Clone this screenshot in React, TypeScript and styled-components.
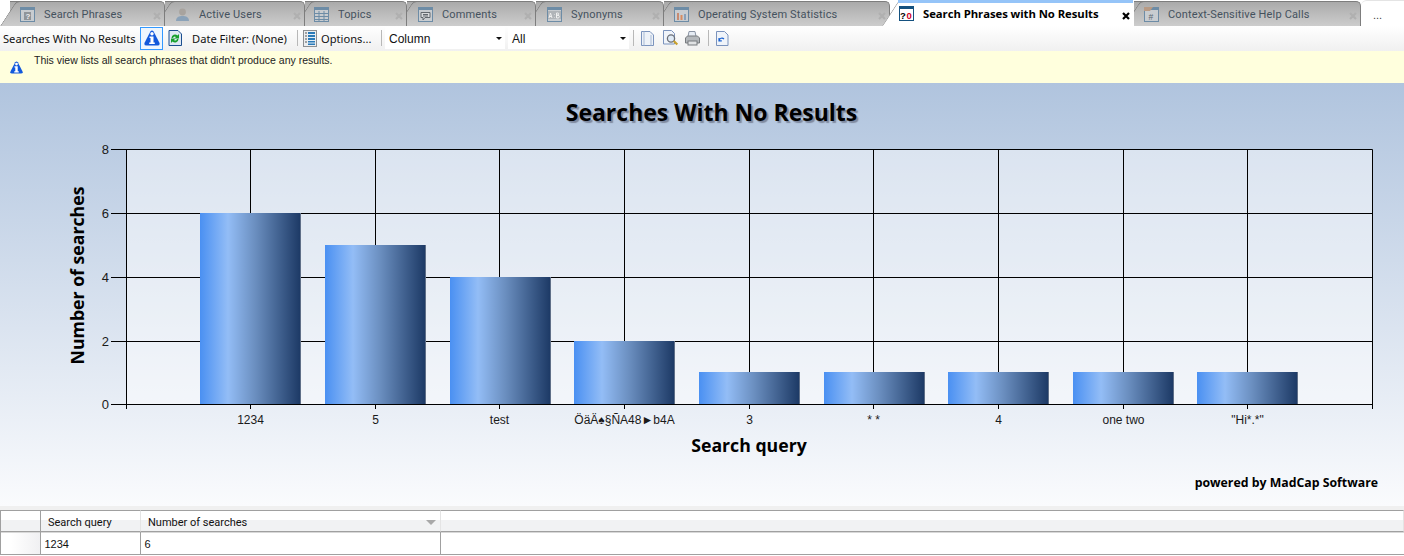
import React from 'react'
import styled, { createGlobalStyle } from 'styled-components'

const GlobalStyle = createGlobalStyle`
  html, body {
    margin: 0;
    padding: 0;
    background: #fff;
    overflow: hidden;
  }
  body {
    font-family: 'Open Sans', 'Noto Sans', sans-serif;
  }
`

const Page = styled.div`
  width: 1404px;
  height: 556px;
  display: flex;
  flex-direction: column;
  overflow: hidden;
`

const TabStrip = styled.div`
  height: 26px;
  display: flex;
  padding-left: 10px;
  background: #fff;
  flex: none;
`

const Tab = styled.div<{ $width: number; $active?: boolean; $z: number }>`
  position: relative;
  width: ${props => props.$width}px;
  box-sizing: border-box;
  z-index: ${props => props.$z};
  display: flex;
  align-items: center;
  margin-top: ${props => (props.$active ? 0 : 1)}px;
  padding-top: ${props => (props.$active ? 3 : 0)}px;
  padding-bottom: ${props => (props.$active ? 2 : 0)}px;
  color: ${props => (props.$active ? '#000' : '#45525e')};
  font-family: ${props => (props.$active ? "'Open Sans'" : 'Roboto')}, sans-serif;
  font-size: ${props => (props.$active ? 11.3 : 11)}px;
  font-weight: ${props => (props.$active ? 700 : 400)};
  letter-spacing: ${props => (props.$active ? '-0.05px' : '0.15px')};
  background: ${props => (props.$active ? '#fff' : 'linear-gradient(#aaaaaa, #cdcdcd)')};
  border-top: ${props => (props.$active ? 'none' : '1px solid #7d7d7d')};
  border-right: 1px solid ${props => (props.$active ? '#fff' : '#7d7d7d')};
  border-top-right-radius: 5px;
  white-space: nowrap;

  &::before {
    content: '';
    position: absolute;
    left: ${props => (props.$active ? -8 : -10)}px;
    top: ${props => (props.$active ? 0 : -1)}px;
    bottom: 0;
    width: 24px;
    z-index: -1;
    transform: skewX(-33deg);
    transform-origin: bottom left;
    background: ${props => (props.$active ? '#fff' : 'linear-gradient(#aaaaaa, #cdcdcd)')};
    border-left: 1px solid ${props => (props.$active ? '#9a9a9a' : '#7d7d7d')};
    border-top: ${props => (props.$active ? 'none' : '1px solid #7d7d7d')};
    border-top-left-radius: 4px;
    box-sizing: border-box;
  }

  &::after {
    content: '';
    display: ${props => (props.$active ? 'block' : 'none')};
    position: absolute;
    left: 8px;
    right: 0;
    top: 0;
    height: 3px;
    background: #95c4f8;
  }
`

const TabIcon = styled.span<{ $offset: number }>`
  position: relative;
  display: flex;
  margin-left: ${props => props.$offset}px;
  margin-right: 9px;
`

const TabLabel = styled.span`
  position: relative;
  flex: 1;
`

const TabClose = styled.span<{ $active?: boolean }>`
  position: relative;
  display: flex;
  margin-right: 3px;
  margin-top: 4px;
  color: ${props => (props.$active ? '#000' : '#b0b0b0')};
`

const MoreTab = styled.div`
  flex: 1;
  position: relative;
  z-index: 0;
  font-size: 11px;
  color: #444;
  padding: 8px 0 0 12px;
  font-family: 'Liberation Sans', sans-serif;
  border-top: 1px solid #e4e4e4;
  border-top-left-radius: 6px;
`

const Toolbar = styled.div`
  height: 25px;
  flex: none;
  display: flex;
  align-items: center;
  background: linear-gradient(#ffffff, #f0f0f0);
  font-family: 'Noto Sans', sans-serif;
  font-size: 11.15px;
  color: #111;
  box-sizing: border-box;
  padding: 0 0 1px 3px;
  white-space: nowrap;
`

const ToolText = styled.span<{ $left?: number; $width: number }>`
  margin-left: ${props => props.$left ?? 0}px;
  width: ${props => props.$width}px;
  flex: none;
`

const ToolButton = styled.span<{ $left: number; $selected?: boolean }>`
  margin-left: ${props => props.$left}px;
  display: flex;
  align-items: center;
  justify-content: center;
  box-sizing: border-box;
  height: ${props => (props.$selected ? '23px' : 'auto')};
  width: ${props => (props.$selected ? '23px' : 'auto')};
  border: ${props => (props.$selected ? '1px solid #3399ff' : 'none')};
  background: ${props => (props.$selected ? '#eef6fe' : 'transparent')};
`

const Separator = styled.span<{ $left: number }>`
  margin-left: ${props => props.$left}px;
  width: 1px;
  height: 16px;
  background: #b8b8b8;
  flex: none;
`

const Combo = styled.div<{ $left: number; $width: number }>`
  margin-left: ${props => props.$left}px;
  width: ${props => props.$width}px;
  height: 22px;
  box-sizing: border-box;
  background: #fff;
  display: flex;
  align-items: center;
  justify-content: space-between;
  padding: 1px 0 0 4px;
  font-family: 'Liberation Sans', sans-serif;
  font-size: 12px;
  flex: none;
  &::after {
    content: '';
    margin-right: 3px;
    border-left: 3px solid transparent;
    border-right: 3px solid transparent;
    border-top: 3px solid #111;
  }
`

const InfoBar = styled.div`
  height: 32px;
  flex: none;
  background: #ffffdd;
  display: flex;
  padding-left: 10px;
  font-family: 'Liberation Sans', sans-serif;
  font-size: 10.5px;
  color: #222;
`

const InfoIconBox = styled.span`
  margin-top: 10px;
  margin-right: 11px;
  display: flex;
  height: 13px;
`

const InfoText = styled.span`
  margin-top: 3px;
  line-height: 13px;
`

const ChartPanel = styled.div`
  height: 423px;
  flex: none;
  display: flex;
  flex-direction: column;
  background: linear-gradient(#b0c4de, #fafbfd);
`

const ChartTitle = styled.div`
  height: 56px;
  box-sizing: border-box;
  padding: 12px 0 0 19px;
  text-align: center;
  font-family: 'Open Sans', sans-serif;
  font-size: 23px;
  line-height: 34px;
  font-weight: 700;
  color: #000;
  text-shadow: 2px 2px 1px #7f8aa0;
`

const ChartSvg = styled.svg`
  display: block;
  flex: none;
`

const AxisLabel = styled.text<{ $size?: number }>`
  font-family: 'Liberation Sans', sans-serif;
  font-size: ${props => props.$size ?? 12}px;
  fill: #1a1a1a;
`

const AxisTitle = styled.text`
  font-family: 'Open Sans', sans-serif;
  font-size: 17.7px;
  font-weight: 700;
  fill: #000;
`

const Powered = styled.div`
  text-align: right;
  padding: 14px 26px 0 0;
  font-family: 'Open Sans', sans-serif;
  font-size: 12.3px;
  line-height: 16px;
  font-weight: 700;
  color: #000;
`

const DataGrid = styled.div`
  flex: 1;
  background: #fff;
  padding-top: 4px;
  display: grid;
  grid-template-columns: 41px 100px 300px 1fr;
  grid-template-rows: 22px 23px;
  background-image: linear-gradient(#f0f0f0, #f0f0f0);
  background-size: 100% 4px;
  background-repeat: no-repeat;
  font-family: 'Liberation Sans', sans-serif;
  font-size: 11px;
  color: #111;
`

const HeaderCell = styled.div<{ $blank?: boolean }>`
  box-sizing: border-box;
  border-top: 1px solid #a0a0a0;
  border-bottom: 1px solid #a0a0a0;
  border-left: ${props => (props.$blank ? '1px solid #a0a0a0' : 'none')};
  border-right: 1px solid ${props => (props.$blank ? '#a0a0a0' : '#e4e4e4')};
  padding: 5px 0 0 7px;
  background: linear-gradient(#fff 45%, #f1f2f3 45%);
  display: flex;
  justify-content: space-between;
  font-family: Roboto, sans-serif;
  font-size: 11px;
  line-height: 13px;
`

const SortArrow = styled.span`
  margin: 4px 4px 0 0;
  border-left: 5px solid transparent;
  border-right: 5px solid transparent;
  border-top: 5px solid #a8a8a8;
`

const RowHead = styled.div`
  box-sizing: border-box;
  border-left: 1px solid #a0a0a0;
  border-right: 1px solid #a0a0a0;
  border-bottom: 1px solid #a0a0a0;
  box-shadow: inset 0 1px #d8d8d8;
  background: linear-gradient(90deg, #fff 25%, #f0f0f2);
`

const Cell = styled.div<{ $empty?: boolean }>`
  box-sizing: border-box;
  border-right: ${props => (props.$empty ? 'none' : '1px solid #a0a0a0')};
  border-bottom: 1px solid #a0a0a0;
  box-shadow: inset 0 1px #d8d8d8;
  padding: 5px 0 0 3.5px;
  font-size: 11px;
  line-height: 14px;
`

const Glyph = ({ children, w = 16, h = 16 }: { children: React.ReactNode; w?: number; h?: number }) => (
  <svg width={w} height={h} viewBox={`0 0 ${w} ${h}`}>
    {children}
  </svg>
)

// window frame shared by the tab icons
const WindowIcon = ({ children, dim = true }: { children?: React.ReactNode; dim?: boolean }) => (
  <Glyph w={15} h={15}>
    <rect x="0.5" y="0.5" width="14" height="14" fill={dim ? '#c8ccd0' : '#fff'} stroke={dim ? '#6d8ca6' : '#14517f'} />
    <rect x="0" y="0" width="15" height="3" fill={dim ? '#6d8ca6' : '#14517f'} />
    {children}
  </Glyph>
)

const HelpIcon = () => (
  <WindowIcon>
    <rect x="4" y="5" width="7" height="8" fill="#8f9499" />
    <text x="5.5" y="12" fontSize="8" fontWeight="700" fill="#eee" fontFamily="Liberation Sans">?</text>
  </WindowIcon>
)

const UserIcon = () => (
  <Glyph w={15} h={15}>
    <circle cx="7.5" cy="5" r="3.4" fill="#a8a39e" />
    <path d="M1 14c0-4 3-5 6.5-5s6.5 1 6.5 5z" fill="#8ba2b8" />
  </Glyph>
)

const TableIcon = () => (
  <WindowIcon>
    <path d="M1 6.5h13M1 9.5h13M1 12.5h13M5 4v10M10 4v10" stroke="#6d8ca6" />
  </WindowIcon>
)

const CommentIcon = () => (
  <WindowIcon>
    <path d="M3 5.5h9v5H7l-2 2.5v-2.500H3z" fill="#d8dadc" stroke="#62686e" />
    <path d="M5 7.500h5M5 9h5" stroke="#62686e" />
  </WindowIcon>
)

const SynonymIcon = () => (
  <WindowIcon>
    <rect x="1" y="4" width="13" height="8" fill="#b0b4b8" />
    <path d="M2 11l1.500-5 1.500 5M2.500 9.500h2.500M7.500 7v.5M7.500 10v.5M9.500 6v5h1.500a1.200 1.200 0 0 0 0-2.700h-1.500M9.500 8h1.300a1 1 0 0 0 0-2h-1.300" stroke="#f0f0f0" fill="none" />
  </WindowIcon>
)

const StatsIcon = () => (
  <WindowIcon>
    <rect x="3" y="6" width="2" height="7" fill="#c88a70" />
    <rect x="6.500" y="8" width="2" height="5" fill="#d88b60" />
    <rect x="10" y="7" width="2" height="6" fill="#8aa0b8" />
  </WindowIcon>
)

const NoResultIcon = () => (
  <WindowIcon dim={false}>
    <text x="1" y="13" fontSize="9.500" fontWeight="700" fill="#000" fontFamily="Liberation Sans">?</text>
    <text x="7.500" y="13" fontSize="9.500" fontWeight="700" fill="#d00028" fontFamily="Liberation Sans">0</text>
  </WindowIcon>
)

const HashIcon = () => (
  <WindowIcon>
    <path d="M0 0h9l-3 4H0z" fill="#b89a84" />
    <text x="4.500" y="12.500" fontSize="8.500" fill="#5b6670" fontFamily="Liberation Sans">#</text>
  </WindowIcon>
)

const CloseX = () => (
  <svg width="8" height="8" viewBox="0 0 8 8">
    <path d="M1 1l6 6M7 1l-6 6" stroke="currentColor" strokeWidth="2.200" />
  </svg>
)

// blue rounded triangle with a white i
const InfoIcon = ({ size = 16 }: { size?: number }) => (
  <svg width={size} height={size} viewBox="0 0 16 16">
    <path d="M6.400 1.500Q8 -.5 9.600 1.500L15.300 12.500Q16.500 15.500 13.500 15.500H2.500Q-.5 15.500 .7 12.500z" fill="#1259dc" />
    <circle cx="8" cy="3.800" r="1.700" fill="#fff" />
    <path d="M5.500 6.500H9.500V12.500H10.800V14H5.200V12.500H6.500V8H5.500z" fill="#fff" />
  </svg>
)

const RefreshIcon = () => (
  <svg width="14" height="16" viewBox="0 0 14 16">
    <path d="M1 .5h9l3.500 3.500v11.500H1z" fill="#dfe8f4" stroke="#1c4f8f" />
    <path d="M3.500 8a3.500 3.500 0 0 1 6-2.400L11 4v4.500H6.500L8 7a2 2 0 0 0-3 1z" fill="#18a02c" />
    <path d="M10.500 9a3.500 3.500 0 0 1-6 2.400L3 13V8.500h4.500L6 10a2 2 0 0 0 3-1z" fill="#18a02c" />
  </svg>
)

const OptionsIcon = () => (
  <svg width="14" height="17" viewBox="0 0 14 17">
    <rect x="0.500" y="0.500" width="13" height="16" fill="#eceef0" stroke="#8c8f92" />
    <path d="M2 3h2M2 6h2M2 9h2M2 12h2" stroke="#555" />
    <rect x="5" y="2" width="7" height="13" fill="#2a7ab8" />
    <path d="M5 4.500h7M5 7.500h7M5 10.500h7M5 13h7" stroke="#e4eef6" />
  </svg>
)

const PageIcon = () => (
  <svg width="13" height="15" viewBox="0 0 13 15">
    <path d="M.5.500h8.500l3.500 3.500v10.500H.5z" fill="#eef2f8" stroke="#7b93bd" />
    <path d="M3 .5v14M10 4v10.500" stroke="#a9bbd6" />
  </svg>
)

const PreviewIcon = () => (
  <svg width="16" height="16" viewBox="0 0 16 16">
    <path d="M.5.500h8l3 3v10.500H.5z" fill="#f0f4fa" stroke="#7b93bd" />
    <circle cx="8" cy="8.500" r="3.600" fill="#dfeaf6" stroke="#6b6f78" strokeWidth="1.300" />
    <path d="M10.800 11l3.500 3.500" stroke="#c9a12e" strokeWidth="2.200" />
  </svg>
)

const PrintIcon = () => (
  <svg width="15" height="15" viewBox="0 0 15 15">
    <path d="M4 .5h6l1 5H3z" fill="#e6ecf4" stroke="#8a94a4" />
    <path d="M.5 7l2-2h10l2 2v5h-14z" fill="#b4b8bc" stroke="#777b7f" />
    <rect x="3" y="10" width="9" height="4" fill="#e0e2e4" stroke="#777b7f" />
  </svg>
)

const ExportIcon = () => (
  <svg width="13" height="15" viewBox="0 0 13 15">
    <path d="M.5.500h8l3.500 3.500v10.500H.5z" fill="#f0f4fa" stroke="#7b93bd" />
    <path d="M3 9.500a3 3 0 0 1 5-1.500M3 7v2.800h2.800" stroke="#1a62d0" strokeWidth="1.200" fill="none" />
  </svg>
)

const tabs = [
  { label: 'Search Phrases', width: 155, offset: 10, icon: <HelpIcon /> },
  { label: 'Active Users', width: 140, offset: 10, icon: <UserIcon /> },
  { label: 'Topics', width: 102, offset: 9, icon: <TableIcon /> },
  { label: 'Comments', width: 129, offset: 11, icon: <CommentIcon /> },
  { label: 'Synonyms', width: 128, offset: 11, icon: <SynonymIcon /> },
  { label: 'Operating System Statistics', width: 226, offset: 10, icon: <StatsIcon /> },
  { label: 'Search Phrases with No Results', width: 244, offset: 9, icon: <NoResultIcon />, active: true },
  { label: 'Context-Sensitive Help Calls', width: 227, offset: 10, icon: <HashIcon /> },
]

const bars = [
  { label: '1234', value: 6 },
  { label: '5', value: 5 },
  { label: 'test', value: 4 },
  { label: 'ÖäÄ♠§ÑA48►b4A', value: 2 },
  { label: '3', value: 1 },
  { label: '* *', value: 1 },
  { label: '4', value: 1 },
  { label: 'one two', value: 1 },
  { label: '"Hi*.*"', value: 1 },
]

const STEP = 124.65
const TOP = 149.5
const BASE = 404.5
const RIGHT = 1372.5

// the chart rounds to whole pixels, so do the same here
const yFor = (v: number) => Math.round(149 + (8 - v) * 31.92) + 0.5
const xFor = (i: number) => Math.floor(126 + i * STEP) + 0.5

const Chart = () => (
  <ChartSvg width={1404} height={322} viewBox="0 139 1404 322">
    <defs>
      <linearGradient id="barFill" x1="0" x2="1" y1="0" y2="0">
        <stop offset="0" stopColor="#4a90f2" />
        <stop offset="0.28" stopColor="#93bdf6" />
        <stop offset="0.55" stopColor="#6b8fc0" />
        <stop offset="1" stopColor="#1d3a66" />
      </linearGradient>
    </defs>
    <rect x={126.5} y={TOP} width={RIGHT - 126.5} height={BASE - TOP} fill="#fff" fillOpacity={0.47} />
    {[0, 2, 4, 6, 8].map(v => (
      <g key={v}>
        <path d={`M111 ${yFor(v)}H${RIGHT}`} stroke="#000" />
        <AxisLabel $size={13} x={109} y={yFor(v) + 4.5} textAnchor="end">
          {v}
        </AxisLabel>
      </g>
    ))}
    {Array.from({ length: 11 }, (_, i) => (
      <path key={i} d={`M${xFor(i)} ${TOP}V409`} stroke="#000" />
    ))}
    {bars.map((bar, i) => {
      const left = Math.ceil(199.8 + i * STEP)
      const top = yFor(bar.value) - 0.5
      const height = 404 - top
      return (
        <g key={bar.label}>
          <rect x={left} y={top} width={100} height={height} fill="url(#barFill)" />
          <rect x={left + 100} y={top} width={1} height={height} fill="#5f6f88" />
          <path d={`M${xFor(i + 1)} 405V409`} stroke="#000" />
          <AxisLabel x={xFor(i + 1)} y={424} textAnchor="middle">
            {bar.label}
          </AxisLabel>
        </g>
      )
    })}
    <AxisTitle x={749} y={452} textAnchor="middle">
      Search query
    </AxisTitle>
    <AxisTitle x={84} y={275.5} textAnchor="middle" transform="rotate(-90 84 275.5)">
      Number of searches
    </AxisTitle>
  </ChartSvg>
)

export default function App() {
  return (
    <Page>
      <GlobalStyle />
      <TabStrip>
        {tabs.map((tab, i) => (
          <Tab key={tab.label} $width={tab.width} $active={tab.active} $z={tab.active ? 20 : 10 - i}>
            <TabIcon $offset={tab.offset}>{tab.icon}</TabIcon>
            <TabLabel>{tab.label}</TabLabel>
            <TabClose $active={tab.active}>
              <CloseX />
            </TabClose>
          </Tab>
        ))}
        <MoreTab>...</MoreTab>
      </TabStrip>
      <Toolbar>
        <ToolText $width={133}>Searches With No Results</ToolText>
        <ToolButton $left={4} $selected>
          <InfoIcon />
        </ToolButton>
        <ToolButton $left={5}>
          <RefreshIcon />
        </ToolButton>
        <ToolText $left={10} $width={96}>
          Date Filter: (None)
        </ToolText>
        <Separator $left={9} />
        <ToolButton $left={5}>
          <OptionsIcon />
        </ToolButton>
        <ToolText $left={4} $width={51}>
          Options...
        </ToolText>
        <Separator $left={9} />
        <Combo $left={3} $width={120}>
          Column
        </Combo>
        <Combo $left={3} $width={121}>
          All
        </Combo>
        <Separator $left={4} />
        <ToolButton $left={7}>
          <PageIcon />
        </ToolButton>
        <ToolButton $left={9}>
          <PreviewIcon />
        </ToolButton>
        <ToolButton $left={6}>
          <PrintIcon />
        </ToolButton>
        <Separator $left={8} />
        <ToolButton $left={7}>
          <ExportIcon />
        </ToolButton>
      </Toolbar>
      <InfoBar>
        <InfoIconBox>
          <InfoIcon size={13} />
        </InfoIconBox>
        <InfoText>This view lists all search phrases that didn't produce any results.</InfoText>
      </InfoBar>
      <ChartPanel>
        <ChartTitle>Searches With No Results</ChartTitle>
        <Chart />
        <Powered>powered by MadCap Software</Powered>
      </ChartPanel>
      <DataGrid>
        <HeaderCell $blank />
        <HeaderCell>Search query</HeaderCell>
        <HeaderCell>
          Number of searches
          <SortArrow />
        </HeaderCell>
        <HeaderCell />
        <RowHead />
        <Cell>1234</Cell>
        <Cell>6</Cell>
        <Cell $empty />
      </DataGrid>
    </Page>
  )
}
